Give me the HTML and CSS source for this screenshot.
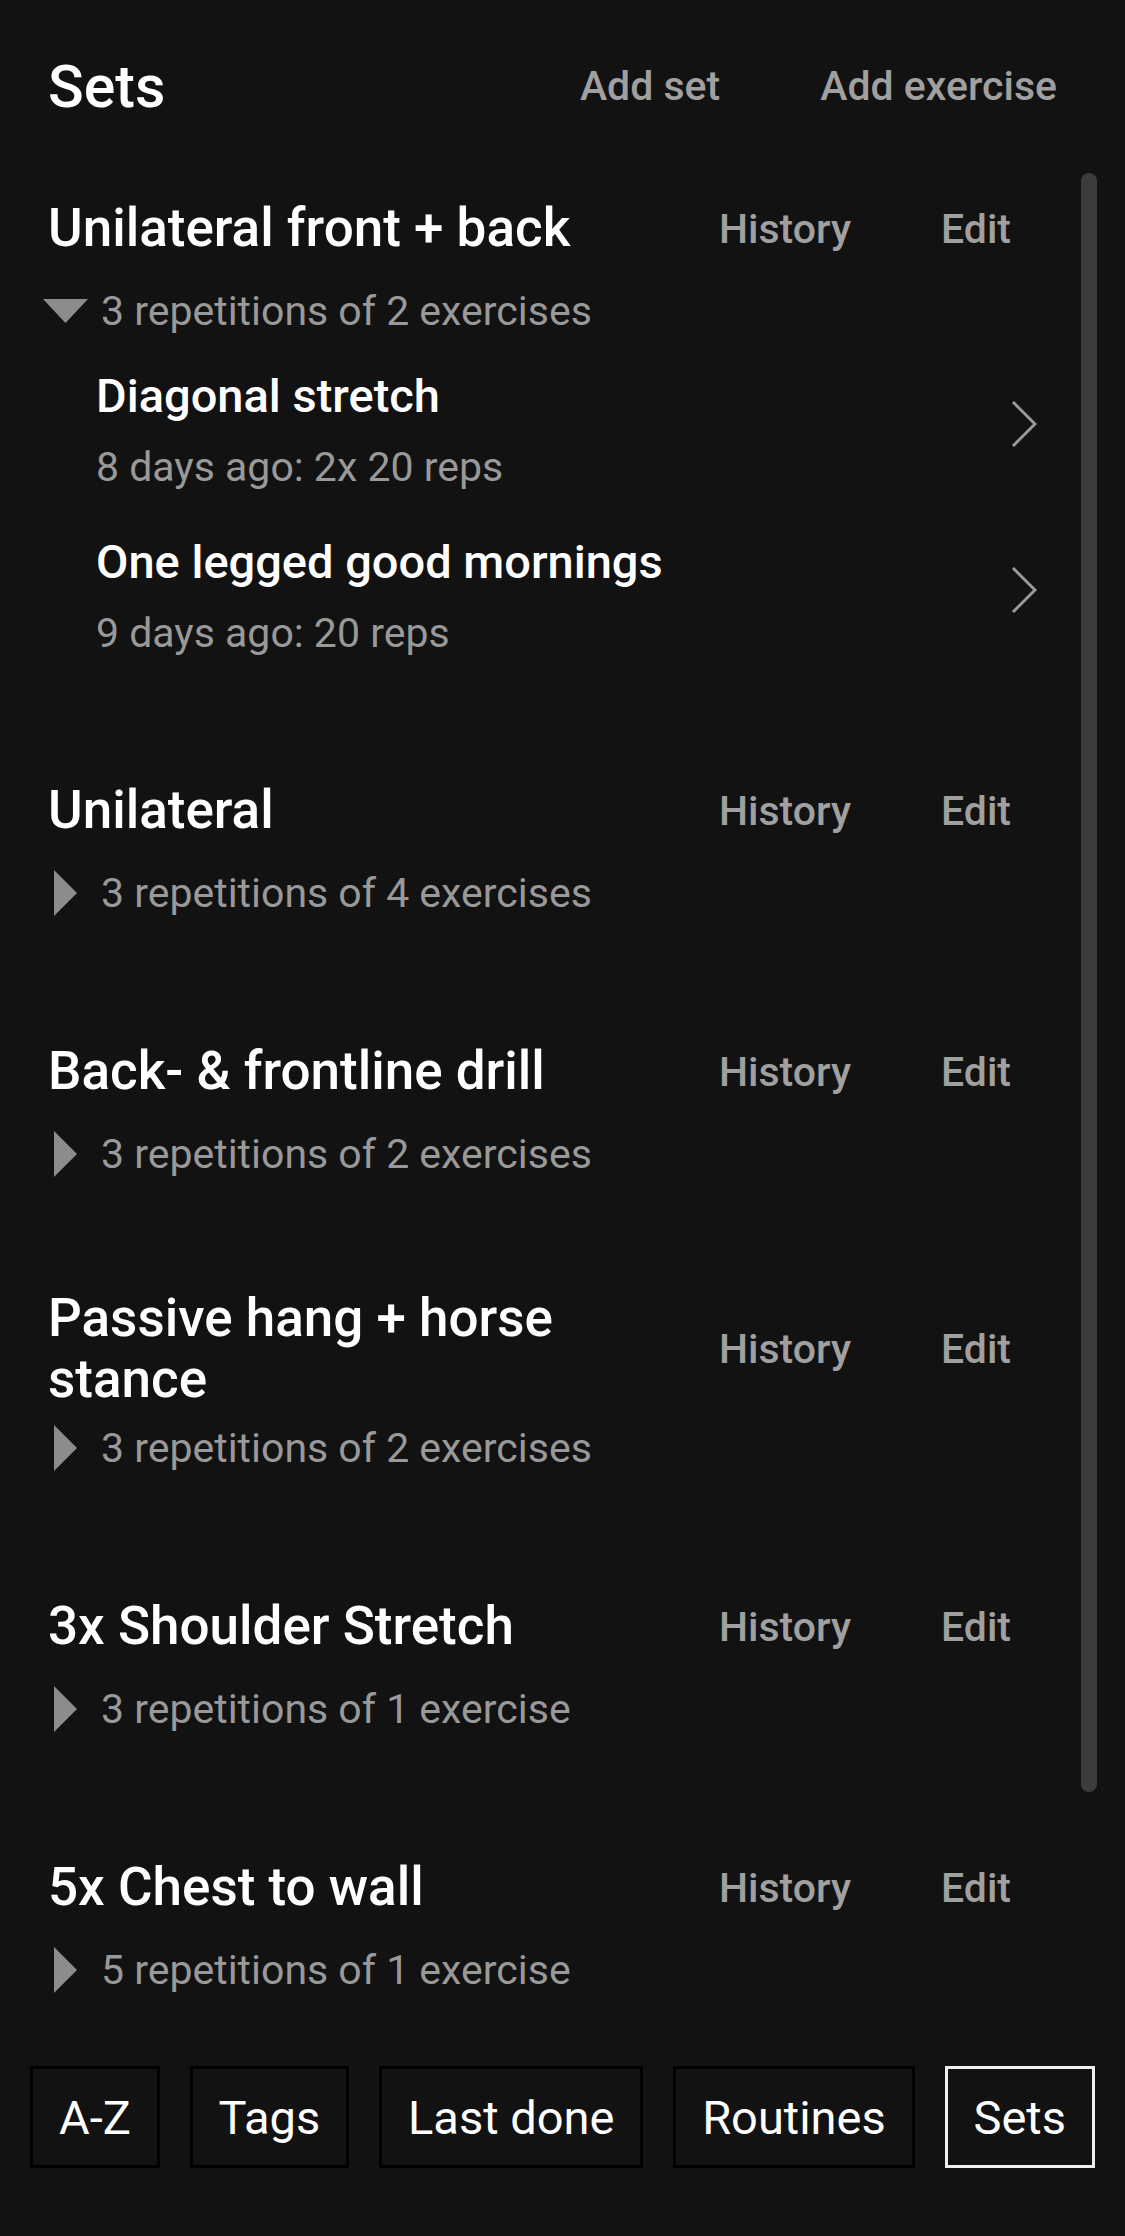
FILE: index.html
```html
<!DOCTYPE html>
<html lang="en">
<head>
  <meta charset="UTF-8" />
  <meta name="viewport" content="width=device-width, initial-scale=1.0"/>
  <title>Sets</title>
  <link rel="stylesheet" href="styles.css">
</head>
<body>
  <header class="top-bar">
    <h1>Sets</h1>
    <div class="top-actions">
      <a href="#">Add set</a>
      <a href="#">Add exercise</a>
    </div>
  </header>

  <main class="sets">
    <div class="scroll-thumb"></div>

    <section class="set open">
      <div class="set-head">
        <h2>Unilateral front + back</h2>
        <div class="set-actions"><a href="#">History</a><a href="#">Edit</a></div>
      </div>
      <div class="set-summary">
        <svg class="toggle" viewBox="0 0 45 46"><polygon points="0,11 45,11 22.5,35"/></svg>
        3 repetitions of 2 exercises
      </div>
      <ul class="exercises">
        <li>
          <div class="ex-text">
            <div class="ex-name">Diagonal stretch</div>
            <div class="ex-last">8 days ago: 2x 20 reps</div>
          </div>
          <svg class="chevron" viewBox="0 0 26 46"><polyline points="2,1 24,23 2,45"/></svg>
        </li>
        <li>
          <div class="ex-text">
            <div class="ex-name">One legged good mornings</div>
            <div class="ex-last">9 days ago: 20 reps</div>
          </div>
          <svg class="chevron" viewBox="0 0 26 46"><polyline points="2,1 24,23 2,45"/></svg>
        </li>
      </ul>
    </section>

    <section class="set">
      <div class="set-head">
        <h2>Unilateral</h2>
        <div class="set-actions"><a href="#">History</a><a href="#">Edit</a></div>
      </div>
      <div class="set-summary">
        <svg class="toggle" viewBox="0 0 45 46"><polygon points="11,0 34,23 11,46"/></svg>
        3 repetitions of 4 exercises
      </div>
    </section>

    <section class="set">
      <div class="set-head">
        <h2>Back- &amp; frontline drill</h2>
        <div class="set-actions"><a href="#">History</a><a href="#">Edit</a></div>
      </div>
      <div class="set-summary">
        <svg class="toggle" viewBox="0 0 45 46"><polygon points="11,0 34,23 11,46"/></svg>
        3 repetitions of 2 exercises
      </div>
    </section>

    <section class="set">
      <div class="set-head">
        <h2>Passive hang + horse stance</h2>
        <div class="set-actions"><a href="#">History</a><a href="#">Edit</a></div>
      </div>
      <div class="set-summary">
        <svg class="toggle" viewBox="0 0 45 46"><polygon points="11,0 34,23 11,46"/></svg>
        3 repetitions of 2 exercises
      </div>
    </section>

    <section class="set">
      <div class="set-head">
        <h2>3x Shoulder Stretch</h2>
        <div class="set-actions"><a href="#">History</a><a href="#">Edit</a></div>
      </div>
      <div class="set-summary">
        <svg class="toggle" viewBox="0 0 45 46"><polygon points="11,0 34,23 11,46"/></svg>
        3 repetitions of 1 exercise
      </div>
    </section>

    <section class="set">
      <div class="set-head">
        <h2>5x Chest to wall</h2>
        <div class="set-actions"><a href="#">History</a><a href="#">Edit</a></div>
      </div>
      <div class="set-summary">
        <svg class="toggle" viewBox="0 0 45 46"><polygon points="11,0 34,23 11,46"/></svg>
        5 repetitions of 1 exercise
      </div>
    </section>
  </main>

  <nav class="tabs">
    <button type="button">A-Z</button>
    <button type="button">Tags</button>
    <button type="button">Last done</button>
    <button type="button">Routines</button>
    <button type="button" class="active">Sets</button>
  </nav>
</body>
</html>
```

FILE: styles.css
```css
body {
  margin: 0;
  height: 100vh;
  background-color: #121212;
  font-family: Roboto, 'Liberation Sans', sans-serif;
  color: #fff;
  display: flex;
  flex-direction: column;
  overflow: hidden;
}
a {
  color: #a0a0a0;
  text-decoration: none;
  font-weight: 500;
  font-size: 41px;
}
.top-bar {
  height: 172px;
  flex-shrink: 0;
  display: flex;
  align-items: center;
  padding: 0 68px 0 48px;
}
.top-bar h1 {
  margin: 0;
  font-size: 59px;
  font-weight: 500;
}
.top-actions {
  margin-left: auto;
  display: flex;
  gap: 100px;
}
.sets {
  flex: 1;
  position: relative;
  overflow: hidden;
  padding: 12px 88px 0 48px;
}
.scroll-thumb {
  position: absolute;
  top: 1px;
  left: 1081px;
  width: 16px;
  height: 1619px;
  border-radius: 8px;
  background-color: #3c3c3c;
}
.set {
  padding-bottom: 96px;
}
.set.open {
  padding-bottom: 85px;
}
.set-head {
  display: flex;
  align-items: center;
  min-height: 89px;
  padding-right: 26px;
}
.set-head h2 {
  flex: 1;
  margin: 0;
  font-size: 53px;
  font-weight: 500;
  line-height: 61px;
}
.set-actions {
  display: flex;
  gap: 90px;
  margin-left: 40px;
}
.set-summary {
  display: flex;
  align-items: center;
  height: 76px;
  margin-left: -5px;
  font-size: 41px;
  color: #999;
}
.toggle {
  width: 45px;
  height: 46px;
  margin-right: 13px;
  fill: #8c8c8c;
}
.exercises {
  list-style: none;
  margin: 0;
  padding: 0 0 0 48px;
}
.exercises li {
  display: flex;
  align-items: center;
  padding: 17px 0 18px;
}
.ex-text {
  flex: 1;
}
.ex-name {
  font-size: 47px;
  font-weight: 500;
  line-height: 60px;
}
.ex-last {
  margin-top: 11px;
  font-size: 41px;
  line-height: 60px;
  color: #999;
}
.chevron {
  width: 26px;
  height: 46px;
  margin-bottom: 16px;
  fill: none;
  stroke: #9a9a9a;
  stroke-width: 3;
}
.tabs {
  flex-shrink: 0;
  display: flex;
  justify-content: space-between;
  padding: 0 30px;
  margin-bottom: 68px;
}
.tabs button {
  height: 102px;
  padding: 0 26px;
  border: 3px solid #000;
  background-color: #121212;
  color: #fff;
  font-family: Roboto, 'Liberation Sans', sans-serif;
  font-size: 47px;
}
.tabs button.active {
  border-color: #f0f0f0;
}
```
